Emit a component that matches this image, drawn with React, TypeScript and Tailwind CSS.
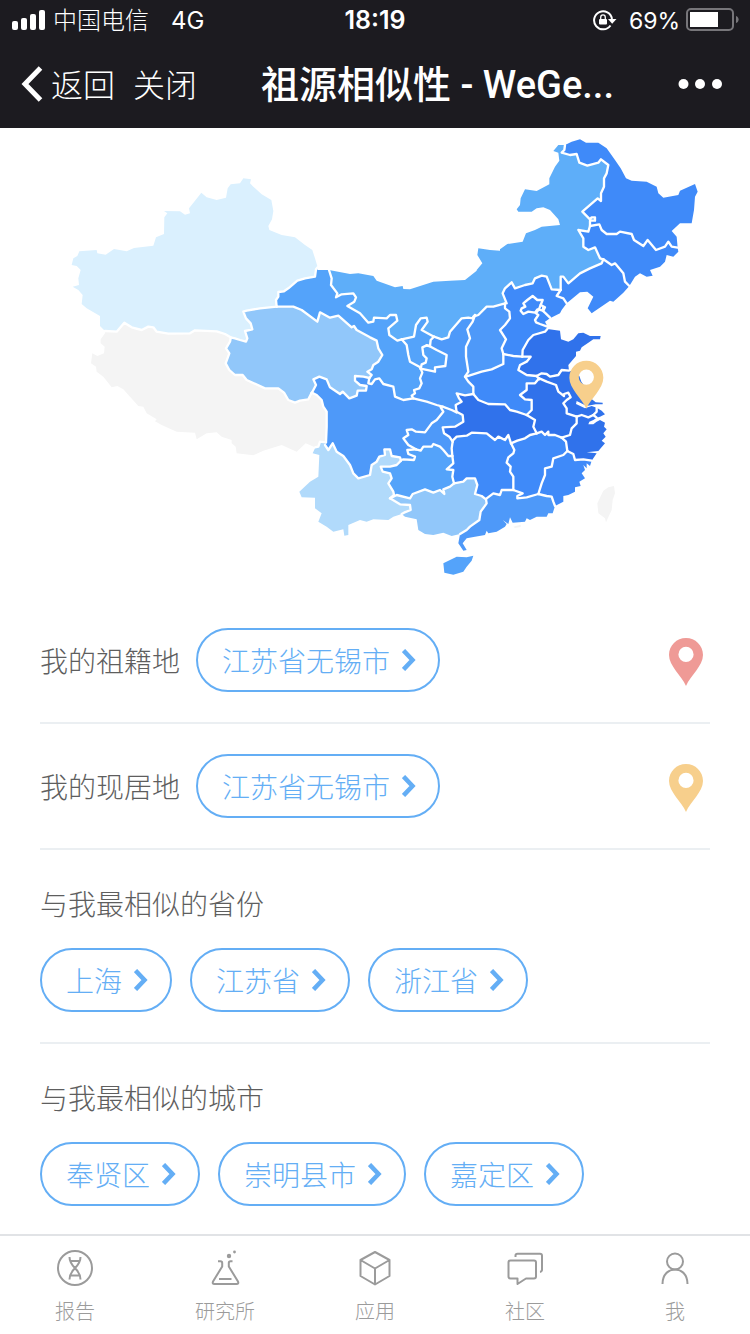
import React, { useState } from 'react';

// The map outline is digitised in tiles, every tile has its own origin.
const tiles: Record<string, [number, number]> = {
  A: [180, 390],
  B: [180, 900],
  C: [780, 750],
  D: [870, 1110],
  E: [1350, 750],
  F: [1290, 1110],
  G: [1500, 390],
};

type Arc = [string, string];

// outer edges (coast and country border), these get no stroke
const edges: Record<string, Arc> = {
  xjOut: ['A', '773,412 765,385 757,360 735,345 705,322 665,315 628,300 625,288 636,268 640,243 634,210 605,193 580,170 570,160 573,148 550,145 540,160 512,163 503,175 498,203 470,210 440,202 424,188 405,212 387,235 390,250 375,254 360,244 312,243 322,250 313,262 312,312 288,322 280,347 222,354 200,364 162,357 137,374 112,370 110,360 58,364 52,378 40,385 35,405 50,408 62,420 55,445 57,465 38,470 55,480 68,495 65,522 80,535 120,558 120,588 135,603'],
  xzOut: ['B', '135,100 122,118 122,130 134,140 132,160 112,168 97,160 93,190 108,200 110,215 130,230 155,262 172,258 190,268 210,290 235,318 250,320 260,340 290,358 285,364 305,375 350,395 405,398 410,418 440,400 470,397 485,410 515,420 515,430 527,440 530,460 580,466 610,452 665,435 710,455 737,430 765,442'],
  gsOut: ['C', '172,60 207,60'],
  nmOut1: ['C', '207,60 270,72 295,70 340,78 350,92 405,112 428,108 430,117 450,118 520,95 570,92 615,90 650,62'],
  nmOut2: ['E', '80,60 97,40 82,15 85,-5 120,0 150,2'],
  nmOut3: ['G', '0,358 22,342 68,335 78,310 105,300 125,290 180,285 175,268 150,240 130,232 110,235 95,245 55,245 50,238 60,225 62,205 75,178 110,183 148,163 148,145 165,110 178,92 175,68 160,63 175,45 195,45'],
  hlOut: ['G', '195,45 215,35 240,28 258,38 295,38 320,55 345,90 362,115 378,145 395,152 440,155 470,170 475,190 490,203 535,195 540,182 585,162 593,185 585,200 582,240 575,280 540,280 515,303 530,320 533,353'],
  jlOut: ['G', '533,353 535,365 520,380 500,375 495,395 480,410 450,420 458,437 440,440 420,430 405,440 388,468'],
  lnOut: ['G', '388,468 370,488 340,515 330,512 275,550 263,535 280,500 262,485 240,487 200,520'],
  heOut: ['E', '350,160 335,180 330,190 300,205 285,215 290,225 292,237'],
  sdOut: ['E', '292,237 330,242 333,268 355,275 370,268 385,250 400,248 420,258 452,258 450,268 430,268 415,278 395,292 390,302 378,305 378,318 355,345 357,362'],
  jsOut1: ['E', '357,362 375,366 388,378 394,395 405,410 425,430'],
  jsOut2: ['F', '485,70 482,85 497,97 518,98 518,103 497,103 470,108 440,93 438,102 465,115 485,108 500,113'],
  shOut: ['F', '500,113 515,122 525,133 510,140 500,143'],
  zjOut: ['F', '500,143 490,150 478,155 475,163 490,163 500,155 510,150 525,158 522,170 530,178 520,190 527,200 515,212 525,220 505,243 470,247 500,250 485,272'],
  fjOut: ['F', '485,272 480,288 470,280 470,295 460,285 465,300 455,310 465,325 448,335 452,348 435,352 435,365 415,375 400,378 400,395 375,408'],
  gdOut1: ['D', '510,492 505,520 520,542 530,540 518,520 530,505'],
  gdOut2: ['F', '110,505 135,500 165,495 170,482 175,490 200,485 225,470 230,462 218,450 235,462 240,442 248,458 285,455 290,445 300,450 320,440 350,440 355,430 368,430 375,408'],
  gxOut: ['D', '335,432 345,440 380,448 385,480 405,492 430,495 460,488 485,498 510,492'],
  ynOut: ['D', '75,235 68,250 88,255 85,320 60,335 28,365 35,382 75,383 75,415 95,430 85,455 110,470 130,485 160,478 163,497 175,495 175,465 210,450 230,455 250,448 295,450 310,440 335,432'],
  hiOut: ['D', '460,580 480,570 500,560 530,562 550,557 545,572 530,590 520,605 490,614 463,608'],
  twOut: ['F', '552,348 555,370 548,390 545,420 528,457 525,445 505,430 502,400 520,362 535,352'],
  hkOut: ['F', '250,470 272,464 272,471 255,474'],
};

// borders shared by two provinces
const borders: Record<string, Arc> = {
  xjGs: ['A', '773,412 768,418 765,440 735,445 712,452 685,475 672,484 655,486 655,500 648,510 650,530'],
  xjQh: ['A', '650,530 600,535 560,542 550,545 558,565 572,580 577,598 555,603 562,625 558,635 540,630 525,625 512,622'],
  xjXz: ['A', '512,622 495,612 470,604 405,601 390,610 325,611 290,605 280,592 265,590 245,600 215,592 193,578 170,605 135,603'],
  xzYn: ['B', '765,442 775,440 780,425 798,427'],
  xzQh: ['B', '512,115 510,125 498,145 508,160 497,190 508,210 525,225 548,225 560,240 615,265 655,265 672,278 685,300 705,308 720,302 745,298 755,278'],
  xzSc: ['B', '755,278 770,285 785,300 790,320 800,335 800,380 798,427'],
  qhGs: ['C', '50,170 100,170 125,180 172,215 180,187 210,203 235,197 275,232 282,228 290,240 330,262 350,272 355,295 367,315 355,335 340,345 335,358 322,365 335,375 328,384'],
  qhSc: ['C', '155,430 168,405 160,388 178,380 200,388 210,412 240,432 248,425 268,445 290,437 293,422 318,422 320,408 300,405 285,392 285,378 310,380 328,384'],
  gsSc: ['C', '328,384 325,400 335,402 345,388 358,385 370,402 400,410 405,440 430,450 460,445'],
  gsNm: ['C', '207,60 215,85 213,105 232,130 228,142 245,133 280,130 288,142 283,155 262,168 300,190 325,218 340,215 342,203 380,205 390,195 408,195 412,212 385,235 388,255 412,272 425,268'],
  gsNx: ['C', '425,268 440,285 445,315 450,335 478,350 482,356'],
  nxNm: ['C', '425,268 462,260 468,225 482,205 500,203 503,215 485,240 500,248 522,260'],
  nxSn: ['C', '522,260 512,270 510,288 500,286'],
  nxGs2: ['C', '500,286 487,292 490,315 500,325 497,338 485,343 482,356'],
  gs2Sn: ['C', '500,286 512,290 530,300 560,315 556,348 525,352 525,365 482,356'],
  gsSn: ['C', '482,356 487,368 480,385 485,400 478,415 462,420 465,430 455,437 460,445'],
  snNm: ['C', '522,260 545,268 565,262 570,245 605,205 625,203 638,205 645,195'],
  snSx: ['C', '645,195 638,215 622,238 630,265 618,290 618,320 625,365 615,380'],
  snHa: ['C', '615,380 625,395 640,410 640,432'],
  snHb: ['C', '640,432 615,436 590,430 597,445 605,455 587,465 590,487'],
  snCq: ['C', '590,487 575,480 548,470'],
  snSc: ['C', '548,470 530,465 500,455 460,445'],
  nmHl: ['G', '195,45 193,60 185,68 210,75 230,72 238,98 262,107 295,98 303,88 325,105 320,130 312,145 312,170 303,190 303,213 293,205 247,245 270,268 275,262 285,262 285,272 270,272 270,288'],
  nmJl: ['G', '270,288 265,305 235,300 250,325 250,350 265,360 285,352 300,385 310,388'],
  nmLn: ['G', '310,388 305,400 270,415 240,430 205,460 190,440 182,440 182,480'],
  heNm: ['G', '182,480 155,478 140,440 125,437 105,445 98,460 75,465 45,475 35,457 15,475 8,490 20,520'],
  sxNm: ['E', '165,160 130,170 110,170 85,195 70,200'],
  hlJl: ['G', '533,353 515,350 505,335 495,350 468,360 443,330 430,348 402,330 395,312 360,305 350,312 320,312 305,300 298,283 270,288'],
  jlLn: ['G', '388,468 375,455 370,430 345,400 335,405 310,388'],
  heLn: ['G', '200,520 190,505 170,498 182,480'],
  heSd: ['E', '292,237 285,245 250,255 235,270 218,300 217,320'],
  heHa: ['E', '217,320 190,318 160,312'],
  heSx: ['E', '160,312 155,295 168,268 150,240 165,225 180,205 178,185 165,175 165,160'],
  sxHa: ['E', '48,380 95,365 125,358 160,342 160,312'],
  sdHa: ['E', '217,320 242,320 230,335 210,345 205,360 230,375 260,378'],
  sdJs: ['E', '260,378 275,370 290,372 300,380 325,375 335,360 357,362'],
  jsHa: ['E', '260,378 268,388'],
  jsAh: ['F', '328,25 350,35 378,45 385,65 402,78 402,72 415,68 422,82 410,90 400,100 410,115 410,130 440,140'],
  jsSh: ['F', '500,113 500,125 490,135'],
  shZj: ['F', '490,135 500,143'],
  jsZj: ['F', '440,140 455,135 475,142 490,135'],
  ahZj: ['F', '440,140 440,160 425,175 420,195 395,203'],
  zjJx: ['F', '395,203 408,215 412,243'],
  fjZj: ['F', '412,243 430,252 435,270 460,268 485,272'],
  ahJx: ['F', '395,203 375,195 355,195 355,185 345,195 335,185 320,190'],
  ahHb: ['F', '320,190 310,170 315,150 290,135'],
  ahHa: ['F', '290,135 305,120 305,90 285,88 270,75 290,60 290,40 315,40 325,28'],
  haHb: ['F', '130,72 145,90 175,102 225,103 240,120 260,125 290,135'],
  hbJx: ['F', '320,190 300,195 285,205 262,212 243,220'],
  hbHn: ['F', '243,220 235,195 225,210 205,200 195,210 170,190 125,188 110,197 80,200 68,212'],
  hbCq: ['D', '488,215 478,200 462,190 458,172 495,170 520,155 518,135 500,125'],
  cqHn: ['D', '488,215 485,235 487,258'],
  cqGz: ['D', '487,258 475,258 460,240 450,230 430,222 425,230 400,230 392,242 378,238'],
  cqSc: ['D', '378,238 355,225 340,205 355,195 350,180 365,178 378,185 405,187 425,160 440,150 460,125 452,112'],
  gzSc: ['D', '378,238 352,240 355,252 375,260 372,270 340,268 333,270'],
  ynSc: ['D', '105,225 115,240 128,220 140,245 160,258 180,285 190,310 205,325 240,315 245,285 260,275 268,260 285,255 283,238 300,238 305,258 330,262 333,272'],
  gzYn: ['D', '333,272 320,285 300,290 272,290 278,305 300,310 305,325 295,340 310,365 312,375 300,385'],
  gxGz: ['D', '300,385 320,375 360,385 368,372 405,358 430,368 450,360 463,372 460,358 480,350 492,340'],
  gxYn: ['D', '300,385 330,403 360,405 362,420 342,428 335,432'],
  gzHn: ['D', '487,258 490,280 470,298 490,300 487,320 492,340'],
  gxHn: ['D', '492,340 520,335 530,325 555,325 562,345 555,372 575,378 588,388'],
  gxGd: ['D', '588,388 590,400 572,425 568,450 540,470 530,480 510,492'],
  gdFj: ['F', '375,408 370,395 365,380 350,378 325,372'],
  gdJx: ['F', '325,372 290,382 262,385 262,378 278,370 250,360'],
  gdHn: ['F', '250,360 215,360 210,375 190,370 170,385'],
  hnJx: ['F', '243,220 253,240 250,250 235,262 230,278 242,290 240,305 250,320 250,360'],
  jxFj: ['F', '325,372 335,340 345,315 345,295 365,290 370,265 400,255 412,243'],
  bj: ['E', '212,182 215,175 226,170 220,160 232,150 248,138 262,150 278,150 272,165 285,172 280,182 262,178 255,188 235,185 220,192 212,182'],
  tj1: ['E', '272,165 268,175 258,190 265,195 255,210 258,217 270,222 292,230'],
  tj2: ['E', '280,172 278,182 287,190 300,203'],
};

const arcs: Record<string, Arc> = { ...edges, ...borders };

// a leading "-" walks the arc backwards
const regions: { name: string; fill: string; ring: string }[] = [
  { name: '新疆', fill: '#daf0fe', ring: 'xjOut -xjXz -xjQh -xjGs' },
  { name: '西藏', fill: '#f4f4f4', ring: 'xzOut xzYn -xzSc -xzQh xjXz' },
  { name: '青海', fill: '#91c7fa', ring: 'xjQh xzQh qhSc -qhGs' },
  { name: '甘肃', fill: '#54a3fa', ring: 'gsOut gsNm gsNx gsSn -gsSc -qhGs -xjGs' },
  { name: '庆阳', fill: '#54a3fa', ring: 'nxGs2 -gs2Sn' },
  { name: '宁夏', fill: '#54a3fa', ring: 'nxNm nxSn nxGs2 -gsNx' },
  { name: '内蒙古', fill: '#5eaef9', ring: 'nmOut1 nmOut2 nmOut3 nmHl nmJl nmLn heNm sxNm -snNm -nxNm -gsNm' },
  { name: '陕西', fill: '#4e99f9', ring: 'snNm snSx snHa snHb snCq snSc -gsSn -gs2Sn -nxSn' },
  { name: '山西', fill: '#4e99f9', ring: 'sxHa heSx sxNm snSx' },
  { name: '河北', fill: '#3f8af9', ring: 'heOut heSd heHa heSx -heNm -heLn' },
  { name: '辽宁', fill: '#3f8af9', ring: 'lnOut heLn -nmLn -jlLn' },
  { name: '吉林', fill: '#3f8af9', ring: 'jlOut jlLn -nmJl -hlJl' },
  { name: '黑龙江', fill: '#3f8af9', ring: 'hlOut hlJl -nmHl' },
  { name: '山东', fill: '#3072eb', ring: 'sdOut -sdJs -sdHa -heSd' },
  { name: '河南', fill: '#3f8af9', ring: 'sxHa -heHa sdHa jsHa -ahHa -haHb -snHa' },
  { name: '江苏', fill: '#3072eb', ring: 'jsOut1 jsOut2 jsSh -jsZj -jsAh -jsHa sdJs' },
  { name: '安徽', fill: '#3072eb', ring: 'jsAh ahZj ahJx ahHb ahHa' },
  { name: '上海', fill: '#3072eb', ring: 'shOut -shZj -jsSh' },
  { name: '浙江', fill: '#3072eb', ring: 'zjOut -fjZj -zjJx -ahZj jsZj shZj' },
  { name: '福建', fill: '#3f8af9', ring: 'fjOut gdFj jxFj fjZj' },
  { name: '江西', fill: '#3f8af9', ring: 'zjJx -jxFj gdJx -hnJx -hbJx -ahJx' },
  { name: '湖北', fill: '#3072eb', ring: 'haHb -ahHb hbJx hbHn hbCq -snHb' },
  { name: '湖南', fill: '#3f8af9', ring: 'hnJx gdHn -gxHn -gzHn -cqHn -hbHn' },
  { name: '重庆', fill: '#4e99f9', ring: 'cqHn cqGz cqSc -snCq -hbCq' },
  { name: '四川', fill: '#4e99f9', ring: 'gsSc -snSc -cqSc gzSc -ynSc -xzSc qhSc' },
  { name: '贵州', fill: '#54a3fa', ring: 'gzHn -gxGz -gzYn -gzSc -cqGz' },
  { name: '云南', fill: '#b1dafb', ring: 'ynOut -gxYn -gzYn -ynSc -xzYn' },
  { name: '广西', fill: '#91c7fa', ring: 'gxOut -gxGd -gxHn -gxGz gxYn' },
  { name: '广东', fill: '#4e99f9', ring: 'gdOut1 gdOut2 gdFj gdJx gdHn gxGd' },
  { name: '海南', fill: '#54a3fa', ring: 'hiOut' },
  { name: '台湾', fill: '#f4f4f4', ring: 'twOut' },
  { name: '香港', fill: '#f4f4f4', ring: 'hkOut' },
];

function points(id: string) {
  const [tile, text] = arcs[id];
  const [ox, oy] = tiles[tile];
  return text.split(' ').map((p) => {
    const [x, y] = p.split(',').map(Number);
    return `${x + ox},${y + oy}`;
  });
}

function ringPoints(ring: string) {
  return ring
    .split(' ')
    .flatMap((id) => (id[0] === '-' ? points(id.slice(1)).reverse() : points(id)))
    .join(' ');
}

// map pin with a see-through hole, 34 x 48
const pinPath =
  'M17 48C12.5 37.5 0 28 0 17C0 7.4 7.6 0 17 0S34 7.4 34 17C34 28 21.5 37.5 17 48ZM17 8.8A7.6 7.6 0 1 0 17 24A7.6 7.6 0 1 0 17 8.8Z';

function ChinaMap() {
  return (
    <svg viewBox="0 384 2250 1410" className="block w-full" role="img" aria-label="祖源相似性">
      {regions.map((r) => (
        <polygon key={r.name} points={ringPoints(r.ring)} fill={r.fill} />
      ))}
      {Object.keys(borders).map((id) => (
        <polyline
          key={id}
          points={points(id).join(' ')}
          fill="none"
          stroke="#fff"
          strokeWidth="7"
          strokeLinejoin="round"
          strokeLinecap="round"
        />
      ))}
      <g transform="translate(1708 1082) scale(3)">
        <path d={pinPath} fill="#f7cf8c" fillRule="evenodd" />
      </g>
    </svg>
  );
}

function Pin({ color }: { color: string }) {
  return (
    <svg width="34" height="48" viewBox="0 0 34 48">
      <path d={pinPath} fill={color} fillRule="evenodd" />
    </svg>
  );
}

function Pill({ children }: { children: React.ReactNode }) {
  return (
    <button
      type="button"
      className="flex h-16 items-center gap-3 rounded-full border-2 border-[#64aef5] pr-[22px] pl-6 text-[28px] font-light text-[#64aef5]"
    >
      <span className="pt-1">{children}</span>
      <svg width="14" height="22" viewBox="0 0 14 22" fill="none" stroke="currentColor" strokeWidth="4.5">
        <path d="M1.5 1.5L10.5 11L1.5 20.5" />
      </svg>
    </button>
  );
}

function PlaceRow({ label, place, color }: { label: string; place: string; color: string }) {
  return (
    <div className="flex items-center border-b-2 border-[#ebeff2] py-[30px]">
      <span className="mr-4 pt-1 text-[28px] font-light text-[#5e5e5e]">{label}</span>
      <Pill>{place}</Pill>
      <div className="mr-[7px] ml-auto pt-1">
        <Pin color={color} />
      </div>
    </div>
  );
}

function PillSection({ title, items, last }: { title: string; items: string[]; last?: boolean }) {
  return (
    <section className={last ? 'pt-9 pb-7' : 'border-b-2 border-[#ebeff2] pt-9 pb-[30px]'}>
      <h2 className="text-[28px] leading-[38px] font-light text-[#5e5e5e]">{title}</h2>
      <div className="mt-6 flex flex-wrap gap-[18px]">
        {items.map((item) => (
          <Pill key={item}>{item}</Pill>
        ))}
      </div>
    </section>
  );
}

function StatusBar() {
  return (
    <div className="relative flex h-10 items-center justify-between pr-[11px] pl-3 text-2xl">
      <div className="flex items-center">
        <svg width="34" height="20" viewBox="0 0 34 20" fill="#fff" className="mr-[7px]">
          <rect x="0" y="11" width="6" height="9" rx="2" />
          <rect x="9" y="8" width="6" height="12" rx="2" />
          <rect x="18" y="4" width="6" height="16" rx="2" />
          <rect x="27" y="0" width="6" height="20" rx="2" />
        </svg>
        <span className="mr-[22px] pt-[2px] font-light">中国电信</span>
        <span className="pt-[2px]">4G</span>
      </div>
      <span className="absolute left-1/2 -translate-x-1/2 pt-[2px] text-[25px] font-semibold">18:19</span>
      <div className="flex items-center">
        <svg width="24" height="22" viewBox="0 0 24 22" fill="none" stroke="#fff" strokeWidth="2" className="mr-3">
          <path d="M17.5 16.5A9 9 0 1 1 19 10" />
          <path d="M15 10H23.500L19.200 14.800Z" fill="#fff" stroke="none" />
          <rect x="6" y="10" width="8" height="5.500" rx="1" fill="#fff" stroke="none" />
          <path d="M7.700 10.500V8.500A2.300 2.600 0 0 1 12.300 8.500V10.500" strokeWidth="1.300" />
        </svg>
        <span className="mr-[6px] pt-[2px] text-[23px]">69%</span>
        <svg width="53" height="24" viewBox="0 0 53 24" fill="none">
          <rect x="1" y="1" width="46" height="21" rx="4" stroke="#77767a" strokeWidth="2" />
          <rect x="4" y="4" width="28" height="15" fill="#fff" />
          <path d="M50 8C53.5 9 53.5 14 50 15Z" fill="#77767a" />
        </svg>
      </div>
    </div>
  );
}

const tabs = [
  {
    label: '报告',
    icon: (
      <>
        <circle cx="20" cy="20" r="17" />
        <path d="M14.5 9C14.5 20 25.5 20 25.5 31.5M25.5 9C25.5 20 14.5 20 14.5 31.5M15.5 13H24.5M15.5 27.5H24.5" />
      </>
    ),
  },
  {
    label: '研究所',
    icon: (
      <>
        <path d="M13 13.2H15.5Q17.2 13.2 17.2 15V18.5L8 33.5Q7 36 9.5 36H31.5Q34 36 33 33.5L23.8 18.5V15Q23.8 13.2 25.5 13.2H27.5M14 31H26.5" />
        <circle cx="24" cy="8" r="2.2" fill="currentColor" stroke="none" />
        <circle cx="29.5" cy="4" r="1.4" fill="currentColor" stroke="none" />
      </>
    ),
  },
  {
    label: '应用',
    icon: <path d="M20 4L34.5 12V28L20 36.5L5.5 28V12ZM5.5 12L20 20.5L34.5 12M20 20.5V36.5" />,
  },
  {
    label: '社区',
    icon: (
      <path d="M10.5 9V7.5Q10.5 5.8 12.5 5.8H35Q37 5.8 37 7.8V21.5Q37 23.8 35 24M5.5 12.5H29Q31 12.5 31 14.5V28.5Q31 30.5 29 30.5H21L12.5 36V30.5H5.5Q3.5 30.5 3.5 28.5V14.5Q3.5 12.5 5.5 12.5Z" />
    ),
  },
  {
    label: '我',
    icon: (
      <>
        <circle cx="20" cy="13.5" r="8" />
        <path d="M7.500 36C7.500 16.500 32.500 16.500 32.500 36" />
      </>
    ),
  },
];

export default function App() {
  const [active, setActive] = useState('');

  return (
    <div className="flex min-h-screen flex-col bg-white font-['Inter','Noto_Sans_CJK_SC',sans-serif]">
      <header className="bg-[#1c1b20] text-white">
        <StatusBar />
        <div className="flex h-[88px] items-center pr-7 pl-[21px]">
          <a href="#back" className="flex items-center gap-2 text-[32px] font-light">
            <svg width="22" height="36" viewBox="0 0 22 36" fill="none" stroke="#fff" strokeWidth="5">
              <path d="M19.5 2L4 18L19.5 34" />
            </svg>
            <span className="pt-1">返回</span>
          </a>
          <a href="#close" className="ml-[18px] pt-1 text-[32px] font-light">
            关闭
          </a>
          <h1 className="min-w-0 flex-1 pt-[2px] text-center font-['Roboto','Noto_Sans_CJK_SC',sans-serif] text-[38px] font-medium whitespace-nowrap">
            祖源相似性 - WeGe...
          </h1>
          <button type="button" aria-label="更多">
            <svg width="44" height="10" viewBox="0 0 44 10" fill="#fff">
              <circle cx="5.500" cy="5" r="5" />
              <circle cx="22" cy="5" r="5" />
              <circle cx="39" cy="5" r="5" />
            </svg>
          </button>
        </div>
      </header>

      <ChinaMap />

      <main className="px-10">
        <PlaceRow label="我的祖籍地" place="江苏省无锡市" color="#ef9a96" />
        <PlaceRow label="我的现居地" place="江苏省无锡市" color="#f7cf8c" />
        <PillSection title="与我最相似的省份" items={['上海', '江苏省', '浙江省']} />
        <PillSection title="与我最相似的城市" items={['奉贤区', '崇明县市', '嘉定区']} last />
      </main>

      <nav className="mt-auto flex border-t-2 border-[#e1e3e6] pt-3 pb-2 text-[#9b9b9b]">
        {tabs.map((tab) => (
          <button
            key={tab.label}
            type="button"
            aria-pressed={active === tab.label}
            onClick={() => setActive(tab.label)}
            className="flex flex-1 flex-col items-center gap-[10px]"
          >
            <svg
              width="40"
              height="40"
              viewBox="0 0 40 40"
              fill="none"
              stroke="currentColor"
              strokeWidth="2"
              strokeLinejoin="round"
            >
              {tab.icon}
            </svg>
            <span className="text-xl font-light">{tab.label}</span>
          </button>
        ))}
      </nav>
    </div>
  );
}
